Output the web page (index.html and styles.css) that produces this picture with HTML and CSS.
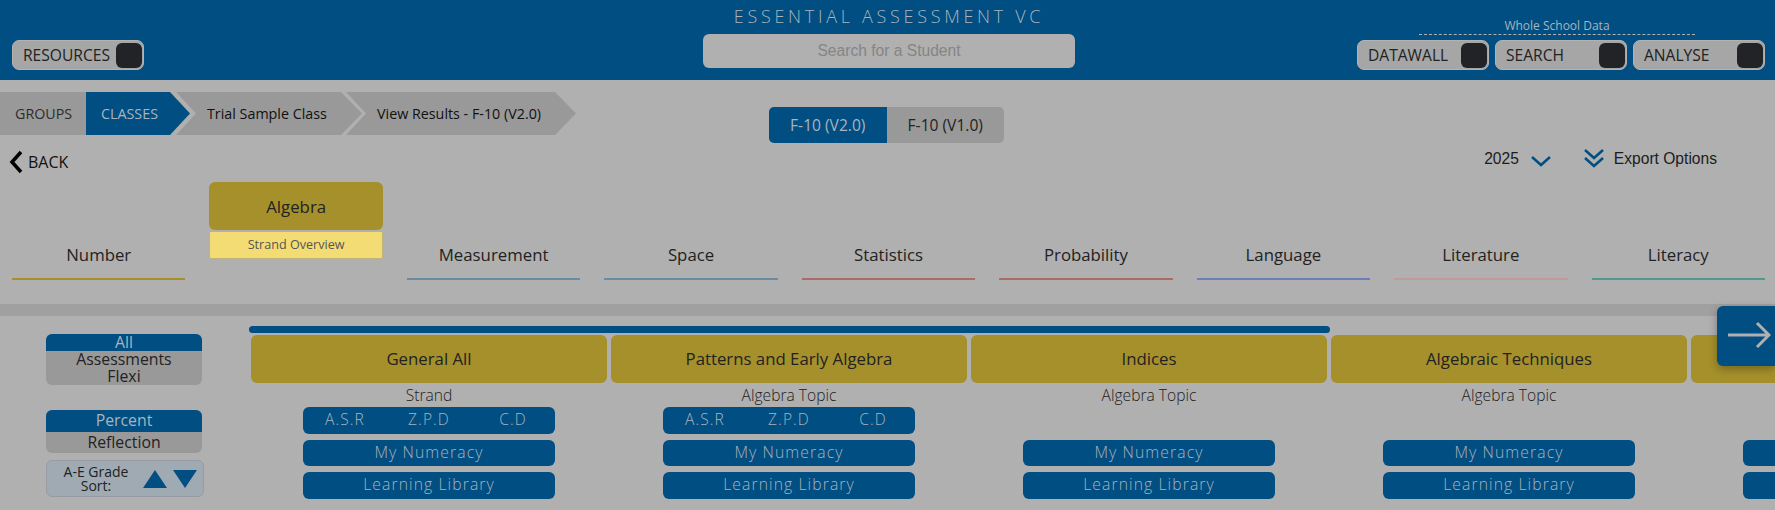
FILE: index.html
```html
<!DOCTYPE html>
<html>
<head>
    <title>Essential Assessment VC</title>
    <meta charset="UTF-8">
    <meta name="viewport" content="width=device-width, initial-scale=1.0">
    <link rel="stylesheet" href="styles.css">
</head>
<body>
    <header class="site-header">
        <div class="header-left">
            <div class="nav-btn nav-btn-resources">RESOURCES<span class="nav-icon"></span></div>
        </div>
        <div class="header-center">
            <div class="site-title">ESSENTIAL ASSESSMENT VC</div>
            <div class="student-search">Search for a Student</div>
        </div>
        <div class="header-right">
            <div class="school-data">
                <div class="school-label">Whole School Data</div>
            </div>
            <div class="nav-group">
                <div class="nav-btn">DATAWALL<span class="nav-icon"></span></div>
                <div class="nav-btn">SEARCH<span class="nav-icon"></span></div>
                <div class="nav-btn">ANALYSE<span class="nav-icon"></span></div>
            </div>
        </div>
    </header>

    <section class="toolbar">
        <div class="toolbar-left">
            <div class="crumbs">
                <div class="crumb crumb-groups">GROUPS</div>
                <div class="crumb crumb-classes">CLASSES</div>
                <div class="crumb crumb-class">Trial Sample Class</div>
                <div class="crumb crumb-results">View Results - F-10 (V2.0)</div>
            </div>
            <div class="back">
                <svg class="back-icon" width="14" height="24" viewBox="0 0 14 24"><path d="M12 2 L3 12 L12 22" fill="none" stroke="#000" stroke-width="3.5"/></svg>
                BACK
            </div>
        </div>
        <div class="version-toggle">
            <div class="version version-on">F-10 (V2.0)</div>
            <div class="version">F-10 (V1.0)</div>
        </div>
        <div class="toolbar-right">
            <span class="year">2025</span>
            <svg class="year-icon" width="20" height="12" viewBox="0 0 20 12"><path d="M1 2 L10 10 L19 2" fill="none" stroke="#004e82" stroke-width="2.5"/></svg>
            <svg class="export-icon" width="20" height="20" viewBox="0 0 20 20"><path d="M1 1 L10 9 L19 1 M1 9 L10 17 L19 9" fill="none" stroke="#004e82" stroke-width="2.5"/></svg>
            <span class="export">Export Options</span>
        </div>
    </section>

    <nav class="strands">
        <div class="strand line-number">Number</div>
        <div class="strand-active">
            <div class="strand-active-name">Algebra</div>
            <div class="strand-overview">Strand Overview</div>
        </div>
        <div class="strand line-measurement">Measurement</div>
        <div class="strand line-space">Space</div>
        <div class="strand line-statistics">Statistics</div>
        <div class="strand line-probability">Probability</div>
        <div class="strand line-language">Language</div>
        <div class="strand line-literature">Literature</div>
        <div class="strand line-literacy">Literacy</div>
    </nav>

    <div class="band"></div>

    <main class="results">
        <aside class="filters">
            <div class="switch switch-type">
                <div class="switch-item switch-on">All</div>
                <div class="switch-item">Assessments</div>
                <div class="switch-item">Flexi</div>
            </div>
            <div class="switch switch-mode">
                <div class="switch-item switch-on">Percent</div>
                <div class="switch-item">Reflection</div>
            </div>
            <div class="grade-sort">
                <div class="grade-label">A-E Grade Sort:</div>
                <svg width="24" height="18" viewBox="0 0 24 18"><polygon points="12,0 24,18 0,18" fill="#004e82"/></svg>
                <svg width="24" height="18" viewBox="0 0 24 18"><polygon points="0,0 24,0 12,18" fill="#004e82"/></svg>
            </div>
        </aside>
        <div class="topics-wrap">
            <div class="topics-bar"></div>
            <div class="topics">
                <div class="topic">
                    <div class="topic-name">General All</div>
                    <div class="topic-type">Strand</div>
                    <div class="topic-btn topic-codes"><span>A.S.R</span><span>Z.P.D</span><span>C.D</span></div>
                    <div class="topic-btn topic-btn-short">My Numeracy</div>
                    <div class="topic-btn">Learning Library</div>
                </div>
                <div class="topic">
                    <div class="topic-name">Patterns and Early Algebra</div>
                    <div class="topic-type">Algebra Topic</div>
                    <div class="topic-btn topic-codes"><span>A.S.R</span><span>Z.P.D</span><span>C.D</span></div>
                    <div class="topic-btn topic-btn-short">My Numeracy</div>
                    <div class="topic-btn">Learning Library</div>
                </div>
                <div class="topic">
                    <div class="topic-name">Indices</div>
                    <div class="topic-type">Algebra Topic</div>
                    <div class="topic-empty"></div>
                    <div class="topic-btn topic-btn-short">My Numeracy</div>
                    <div class="topic-btn">Learning Library</div>
                </div>
                <div class="topic">
                    <div class="topic-name">Algebraic Techniques</div>
                    <div class="topic-type">Algebra Topic</div>
                    <div class="topic-empty"></div>
                    <div class="topic-btn topic-btn-short">My Numeracy</div>
                    <div class="topic-btn">Learning Library</div>
                </div>
                <div class="topic">
                    <div class="topic-name"></div>
                    <div class="topic-type"></div>
                    <div class="topic-empty"></div>
                    <div class="topic-btn topic-btn-short"></div>
                    <div class="topic-btn"></div>
                </div>
            </div>
        </div>
    </main>

    <div class="next-btn">
        <svg width="44" height="28" viewBox="0 0 44 28"><path d="M1 14 H41 M30 2 L42 14 L30 26" fill="none" stroke="#b0b0b0" stroke-width="3"/></svg>
    </div>
</body>
</html>
```

FILE: styles.css
```css
html, body {
    margin: 0;
    height: 510px;
    overflow: hidden;
}
body {
    font-family: "Open Sans", sans-serif;
    background-color: #b0b0b0;
    color: #222;
    position: relative;
}

/* header */
.site-header {
    background-color: #004e82;
    height: 80px;
    display: grid;
    grid-template-columns: 1fr 372px 1fr;
    padding-left: 3px;
}
.header-left {
    padding: 40px 0 0 9px;
}
.header-center {
    text-align: center;
}
.site-title {
    color: #a9b4bc;
    font-size: 18px;
    font-weight: 300;
    letter-spacing: 3.7px;
    line-height: 24px;
    height: 34px;
    padding-top: 4px;
    box-sizing: border-box;
}
.student-search {
    background-color: #b0b0b0;
    color: #858585;
    font-family: "Liberation Sans", sans-serif;
    font-size: 15.6px;
    line-height: 34px;
    height: 34px;
    border-radius: 6px;
}
.header-right {
    display: flex;
    flex-direction: column;
    align-items: flex-end;
    padding-right: 10px;
}
.school-data {
    width: 276px;
    height: 35px;
    margin-right: 70px;
    box-sizing: border-box;
    padding-top: 17px;
    border-bottom: 1px dashed #b0b0b0;
    text-align: center;
}
.school-label {
    color: #a9b4bc;
    font-size: 12px;
    line-height: 17px;
}
.nav-group {
    display: flex;
    gap: 6px;
    margin-top: 5px;
}
.nav-btn {
    background-color: #a6a6a6;
    border: 1px solid #b2b2b2;
    border-radius: 7px;
    height: 30px;
    width: 132px;
    box-sizing: border-box;
    padding: 0 1px 0 10px;
    display: flex;
    align-items: center;
    justify-content: space-between;
    font-size: 15.6px;
    color: #222;
}
.nav-icon {
    width: 26px;
    height: 25px;
    background-color: #222327;
    border-radius: 6px;
}

/* breadcrumbs, version, options */
.toolbar {
    height: 102px;
    display: grid;
    grid-template-columns: 1fr 235px 1fr;
    padding-right: 2px;
}
.crumbs {
    display: flex;
    margin-top: 12px;
    height: 43px;
    font-size: 14.3px;
    line-height: 43px;
}
.crumb {
    background-color: #999;
    box-sizing: border-box;
    flex-shrink: 0;
    white-space: nowrap;
}
.crumb-groups {
    width: 86px;
    padding-left: 15px;
    color: #2c2c2c;
}
.crumb-classes {
    width: 104px;
    padding-left: 15px;
    background-color: #004e82;
    color: #a9b4bc;
    clip-path: polygon(0 0, 84px 0, 100% 50%, 84px 100%, 0 100%);
}
.crumb-class {
    width: 186px;
    margin-left: -14px;
    padding-left: 31px;
    color: #111;
    clip-path: polygon(0 0, 165px 0, 100% 50%, 165px 100%, 0 100%, 20px 50%);
}
.crumb-results {
    width: 230px;
    margin-left: -16px;
    padding-left: 31px;
    color: #111;
    clip-path: polygon(0 0, 209px 0, 100% 50%, 209px 100%, 0 100%, 20px 50%);
}
.back {
    display: flex;
    align-items: center;
    gap: 5px;
    margin: 15px 0 0 9px;
    height: 24px;
    font-size: 16px;
    color: #111;
}
.version-toggle {
    display: flex;
    height: 36px;
    margin-top: 27px;
    border-radius: 5px;
    overflow: hidden;
    font-size: 15.6px;
    line-height: 36px;
    text-align: center;
}
.version {
    flex: 1;
    background-color: #999;
    color: #222;
}
.version-on {
    background-color: #004e82;
    color: #a9b4bc;
}
.toolbar-right {
    display: flex;
    align-items: center;
    justify-content: flex-end;
    height: 20px;
    margin-top: 69px;
    padding-right: 56px;
    font-family: "Liberation Sans", sans-serif;
    font-size: 15.6px;
    color: #1c1c1c;
}
.year-icon {
    margin-left: 12px;
    margin-top: 3px;
}
.export-icon {
    margin-left: 33px;
    margin-right: 10px;
}

/* strand tabs */
.strands {
    display: grid;
    grid-template-columns: repeat(9, 1fr);
    column-gap: 24px;
    padding: 0 10px 0 12px;
    height: 122px;
    align-items: start;
}
.strand {
    margin-top: 62px;
    height: 34px;
    line-height: 22px;
    border-bottom: 2px solid #a6902b;
    text-align: center;
    font-size: 16.8px;
}
.line-measurement { border-color: #6b8ba3; }
.line-space { border-color: #6b8ba3; }
.line-statistics { border-color: #ae6a66; }
.line-probability { border-color: #ae6a66; }
.line-language { border-color: #6a80b8; }
.line-literature { border-color: #c09a98; }
.line-literacy { border-color: #4f9a8e; }
.strand-active {
    text-align: center;
}
.strand-active-name {
    background-color: #a6902b;
    border-radius: 6px;
    height: 48px;
    line-height: 50px;
    font-size: 16.8px;
}
.strand-overview {
    background-color: #f4dc74;
    border: 1px solid #bfb37a;
    border-radius: 2px;
    box-sizing: border-box;
    height: 28px;
    margin-top: 1px;
    line-height: 26px;
    font-size: 12.6px;
    color: #555;
}
.band {
    height: 12px;
    background-color: #a0a0a0;
}

/* results */
.results {
    display: flex;
    height: 194px;
}
.filters {
    width: 249px;
    flex-shrink: 0;
    box-sizing: border-box;
    padding-left: 46px;
}
.switch {
    width: 156px;
    border-radius: 6px;
    background-color: #999;
    text-align: center;
    font-size: 15.8px;
}
.switch-type {
    margin-top: 18px;
    line-height: 17px;
}
.switch-mode {
    margin-top: 25px;
    line-height: 21.5px;
}
.switch-on {
    background-color: #004e82;
    border-radius: 6px 6px 0 0;
    color: #a9b4bc;
}
.grade-sort {
    display: flex;
    align-items: center;
    width: 158px;
    height: 37px;
    box-sizing: border-box;
    margin-top: 7px;
    padding-left: 14px;
    background-color: #a0aab3;
    border: 1px solid #969ca2;
    border-radius: 6px;
    font-size: 14px;
    line-height: 14px;
    text-align: center;
}
.grade-label {
    width: 70px;
    margin-right: 12px;
}
.grade-sort svg {
    margin-right: 6px;
    flex-shrink: 0;
}
.topics-wrap {
    flex: 1;
    min-width: 0;
    padding-top: 10px;
}
.topics-bar {
    width: 1081px;
    height: 7px;
    background-color: #004e82;
    border-radius: 4px;
}
.topics {
    display: flex;
    gap: 4px;
    margin: 2px 0 0 2px;
}
.topic {
    width: 356px;
    flex-shrink: 0;
    display: flex;
    flex-direction: column;
    align-items: center;
}
.topic-name {
    align-self: stretch;
    background-color: #a6902b;
    border-radius: 6px;
    height: 48px;
    line-height: 48px;
    text-align: center;
    font-size: 16.8px;
}
.topic-type {
    height: 24px;
    line-height: 24px;
    font-size: 15.6px;
    font-weight: 300;
}
.topic-btn {
    width: 252px;
    height: 27px;
    line-height: 24px;
    margin-bottom: 6px;
    background-color: #004e82;
    border-radius: 6px;
    color: #a9b4bc;
    font-size: 15.7px;
    font-weight: 300;
    letter-spacing: 1.1px;
    text-align: center;
}
.topic-btn-short {
    height: 26px;
}
.topic-codes {
    display: grid;
    grid-template-columns: repeat(3, 1fr);
    font-size: 15.5px;
}
.topic-empty {
    height: 33px;
}
.next-btn {
    position: absolute;
    top: 306px;
    right: 0;
    width: 58px;
    height: 60px;
    background-color: #004e82;
    border-radius: 6px 0 0 6px;
    box-shadow: 0 3px 8px rgba(0, 0, 0, 0.3);
    display: flex;
    align-items: center;
    justify-content: flex-end;
    padding: 0 4px 2px 0;
    box-sizing: border-box;
}
```
